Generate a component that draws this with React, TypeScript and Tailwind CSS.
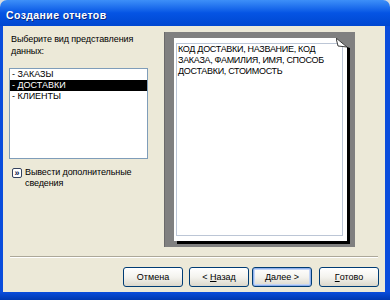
import React from "react";

const F = { fontFamily: '"Liberation Sans", Arial, sans-serif' };

function Btn({ children, def }: { children: React.ReactNode; def?: boolean }) {
  return (
    <div
      className={
        "w-[60px] h-[20px] rounded-[3px] border border-[#003C74] bg-gradient-to-b from-[#FFFFFF] via-[#F4F3EE] to-[#DCD8CC] flex items-center justify-center text-[9px] text-black leading-none whitespace-pre " +
        (def ? "shadow-[inset_0_0_0_1px_#8FB0EC,inset_0_0_0_2px_#C3D5F6]" : "")
      }
    >
      {children}
    </div>
  );
}

export default function App() {
  return (
    <div className="w-[390px] h-[300px] bg-[#D8DCE0] overflow-hidden" style={F}>
      <div className="w-[390px] h-[300px] flex flex-col rounded-t-[7px] overflow-hidden">
        {/* title bar */}
        <div className="h-[26px] shrink-0 bg-gradient-to-b from-[#3D8FF8] via-[#0554E4] to-[#0047D0] flex items-center pl-[6px] pt-[5px]">
          <span className="text-white font-bold text-[10.5px] tracking-[0.4px] [text-shadow:1px_1px_0_#0A2A80]">
            Создание отчетов
          </span>
        </div>
        <div className="flex flex-1 min-h-0">
          <div className="w-[3px] bg-[#0A4DDC]" />
          {/* client */}
          <div className="flex-1 flex flex-col bg-[#ECE9D8]">
            <div className="flex pt-[6px] h-[221px]">
              <div className="w-[161px] flex flex-col pl-[6px]">
                <p className="mt-[1px] pl-[2px] text-[9px] tracking-[-0.1px] leading-[12px] text-black whitespace-nowrap">
                  Выберите вид представления
                  <br />
                  данных:
                </p>
                <div className="mt-[11px] w-[139px] h-[91px] border border-[#7F9DB9] bg-white flex flex-col text-[9px]">
                  <div className="h-[11px] leading-[11px] pl-[2px] text-black">- ЗАКАЗЫ</div>
                  <div className="h-[11px] leading-[11px] pl-[2px] bg-black text-white">- ДОСТАВКИ</div>
                  <div className="h-[11px] leading-[11px] pl-[2px] text-black">- КЛИЕНТЫ</div>
                </div>
                <div className="mt-[8px] flex items-start pl-[3px]">
                  <div className="mt-[1px] w-[10px] h-[10px] rounded-[2px] border border-[#34425E] bg-white flex items-center justify-center text-[9px] leading-none font-bold text-[#10204A]">
                    »
                  </div>
                  <p className="ml-[3px] text-[9px] tracking-[-0.1px] leading-[11px] text-black whitespace-nowrap">
                    Вывести дополнительные
                    <br />
                    сведения
                  </p>
                </div>
              </div>
              <div className="w-[191px] h-[215px] bg-[#808080] border-l border-[#6A6A6A] pl-[9px] pt-[6px]">
                <div className="relative w-[173px] h-[203px] bg-white shadow-[3px_3px_0_#000]">
                  <div className="absolute left-[2px] top-[5px] right-[4px] bottom-[5px] border border-[#BCC6D6]" />
                  <div className="absolute left-[4px] top-[6px] text-[9px] tracking-[-0.3px] leading-[11px] text-black whitespace-nowrap">
                    КОД ДОСТАВКИ, НАЗВАНИЕ, КОД
                    <br />
                    ЗАКАЗА, ФАМИЛИЯ, ИМЯ, СПОСОБ
                    <br />
                    ДОСТАВКИ, СТОИМОСТЬ
                  </div>
                  <svg
                    className="absolute top-0 right-[-3px]"
                    width="14"
                    height="10"
                    viewBox="0 0 14 10"
                  >
                    <polygon points="0,0 14,0 14,10 11,9" fill="#808080" />
                    <polygon points="0,0 2,8 11,9" fill="#FFFFFF" stroke="#3A3A3A" strokeWidth="1" />
                  </svg>
                </div>
              </div>
            </div>
            <div className="mt-[9px] mx-[7px] border-t border-[#ACA899] border-b border-b-white" />
            <div className="mt-[9px] flex pl-[120px]">
              <Btn>Отмена</Btn>
              <div className="w-[6px]" />
              <Btn>
                &lt; <span className="underline">Н</span>азад
              </Btn>
              <div className="w-[3px]" />
              <Btn def>
                <span className="underline">Д</span>алее &gt;
              </Btn>
              <div className="w-[7px]" />
              <Btn>
                <span className="underline">Г</span>отово
              </Btn>
            </div>
          </div>
          <div className="w-[5px] bg-[#0A4DDC]" />
        </div>
        <div className="h-[8px] shrink-0 bg-gradient-to-b from-[#0A4DDC] to-[#0038B0]" />
      </div>
    </div>
  );
}
